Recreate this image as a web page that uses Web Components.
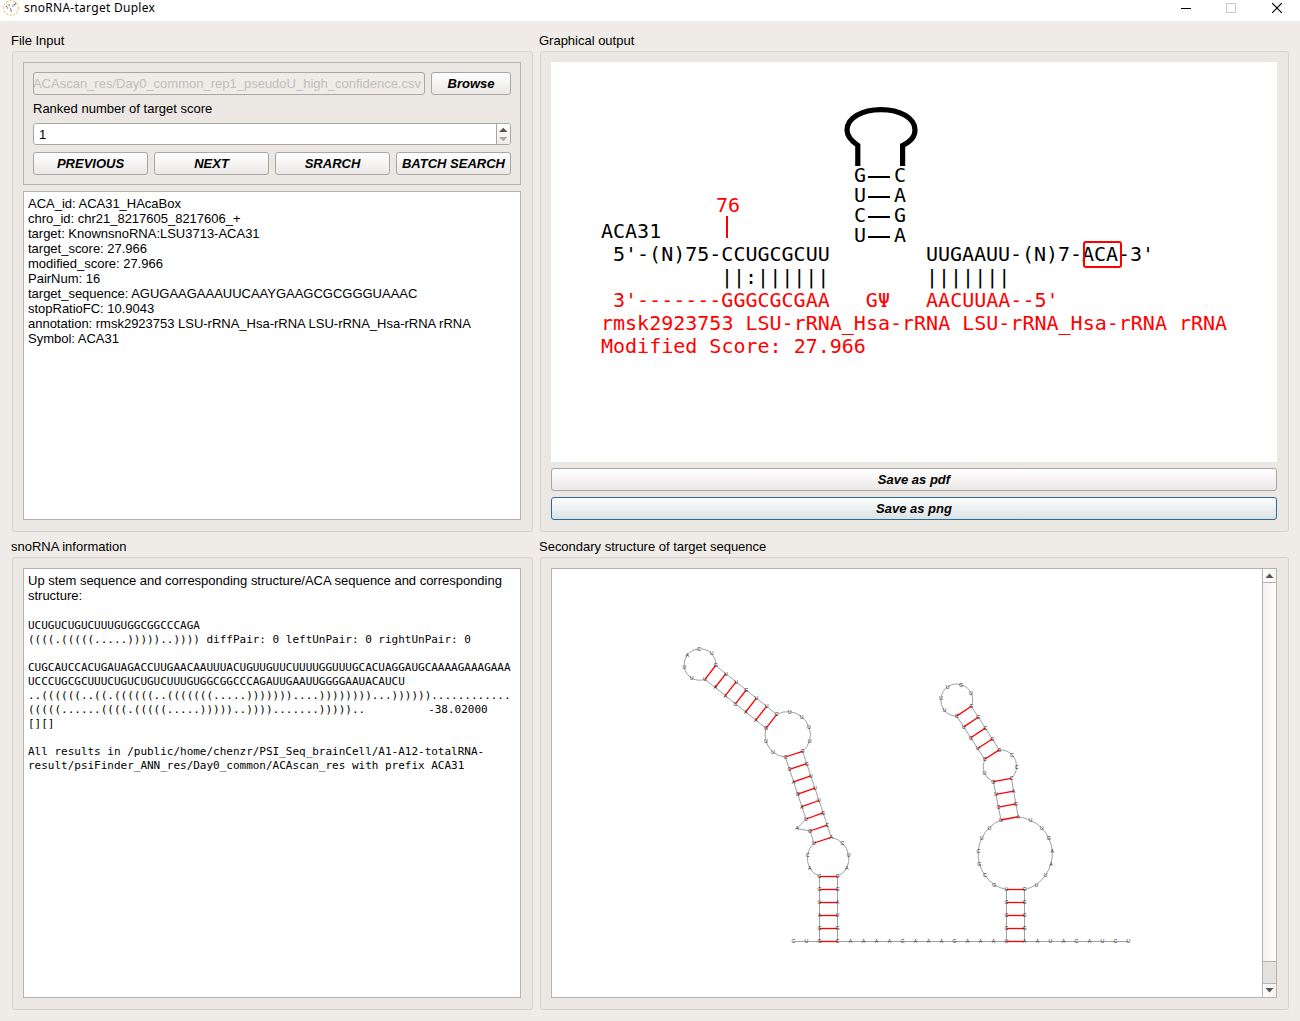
<!DOCTYPE html>
<html lang="en"><head><meta charset="utf-8"><title>snoRNA-target Duplex</title>
<style>html,body{margin:0;width:1300px;height:1021px;overflow:hidden;background:#efebe7}</style></head>
<body><duplex-app></duplex-app>
<script>
function define(name, html, setup){
  customElements.define(name, class extends HTMLElement{
    constructor(){super();this.attachShadow({mode:'open'}).innerHTML='<style>*{box-sizing:border-box}:host{box-sizing:border-box}</style>'+html;}
    connectedCallback(){if(setup)setup(this,this.shadowRoot);}
  });
}

define('title-bar',`<style>
:host{display:flex;height:21px;background:#fff;align-items:flex-start;padding-left:3px;font:12px/16px "Noto Sans",sans-serif;color:#000}
span{margin-left:5px;flex:1;letter-spacing:.28px}svg{display:block}</style>
<svg width="16" height="16" viewBox="0 0 16 16"><circle cx="8" cy="8" r="7.3" fill="none" stroke="#f5bd72" stroke-width="1.1" stroke-dasharray="2.4 1.2"/><path d="M4 4.5l2.200 1.800 1.200 2.200.5 3M12 3.500l-1.500 1.700-2 1" fill="none" stroke="#bbb" stroke-width=".7"/><path d="M3 6.500h1M5.600 5h1.200M11 4.500h1.400M9.500 6.200h1M4 8h1M7.300 9h1M7.700 11h1.200M12 3h1" stroke="#444" stroke-width="1"/></svg>
<span>snoRNA-target Duplex</span>
<svg width="120" height="21" viewBox="1180 0 120 21"><path d="M1181 8.5h10" stroke="#000"/><rect x="1226.5" y="3.5" width="9" height="9" fill="none" stroke="#ccc"/><path d="M1272.2 3.2l9.6 9.6M1281.8 3.2l-9.6 9.6" stroke="#000" stroke-width="1.2"/></svg>`);

define('group-panel',`<style>
:host{display:flex;flex-direction:column;font:13px/15px "Liberation Sans",Arial,sans-serif;color:#000}
.t{height:18px;margin-left:-1px;white-space:nowrap;letter-spacing:-.01px}
.b{flex:1;min-height:0;border:1px solid #d6d2ce;border-radius:3px;background:#ebe7e2;padding:10px 11px 11px 10px;display:flex;flex-direction:column}
</style><div class="t"></div><div class="b"><slot></slot></div>`,(h,r)=>r.querySelector('.t').textContent=h.getAttribute('label'));

define('push-button',`<style>
:host{display:flex;height:23px;align-items:center;justify-content:center;border:1px solid #aaa6a3;border-radius:3px;background:linear-gradient(#fff,#ebe9e7);font:italic bold 13px/15px "Liberation Sans",Arial,sans-serif;color:#000;white-space:nowrap}
:host([active]){border-color:#2a6b98;background:linear-gradient(#fdfefe,#dae2e5)}
</style><span><slot></slot></span>`);

define('path-field',`<style>
:host{display:flex;height:23px;justify-content:flex-end;align-items:center;overflow:hidden;border:1px solid #aaa6a3;border-radius:3px;background:#efebe7;padding-right:3px;color:#bebebe;font:13px/15px "Liberation Sans",Arial,sans-serif;white-space:nowrap}
</style><span><slot></slot></span>`);

define('spin-box',`<style>
:host{display:flex;height:22px;border:1px solid #aaa6a3;border-radius:3px;background:#fff;font:13px/20px "Liberation Sans",Arial,sans-serif}
span{flex:1;padding:1px 0 0 5px}div{width:14px;border-left:1px solid #aaa6a3;background:linear-gradient(#fff,#efedeb);border-radius:0 2px 2px 0}svg{display:block}
</style><span><slot></slot></span><div><svg width="13" height="20"><path d="M2 8h8.500L6.250 3.700z" fill="#555"/><path d="M2 13h8.500L6.250 17.300z" fill="#aaa"/></svg></div>`);

define('text-view',`<style>
:host{display:block;border:1px solid #b6b2ae;background:#fff;padding:4px;font:13px/15px "Liberation Sans",Arial,sans-serif;letter-spacing:-.012px;white-space:pre;color:#000;overflow:hidden}
::slotted(.m){font:11px/14px "DejaVu Sans Mono",monospace}
</style><slot></slot>`);

define('search-form',`<style>
:host{display:flex;flex-direction:column;height:123px;border:1px solid #b6b2ae;padding:9px;font:13px/15px "Liberation Sans",Arial,sans-serif}
.r{display:flex;gap:6px}path-field{width:392px}.r>push-button{flex:1 0 0;min-width:0}
.l{height:28px;padding-top:6px}spin-box{margin-bottom:7px}
</style><div class="r"><path-field>ACAscan_res/Day0_common_rep1_pseudoU_high_confidence.csv</path-field><push-button>Browse</push-button></div>
<div class="l">Ranked number of target score</div><spin-box>1</spin-box>
<div class="r"><push-button>PREVIOUS</push-button><push-button>NEXT</push-button><push-button>SRARCH</push-button><push-button>BATCH SEARCH</push-button></div>`);

define('duplex-view',`<style>:host{display:block;height:400px;background:#fff}svg{display:block}text{font:20px "DejaVu Sans Mono",monospace;white-space:pre}.r{fill:#f00}</style>
<svg width="726" height="400" viewBox="551 62 726 400">
<path d="M857.8 166V145.3C850 140 847 135.500 847 130C847 118 862 109.700 881 109.700C900 109.700 915 118 915 130C915 136.500 911 141.500 902.600 145.500V166" fill="none" stroke="#000" stroke-width="5.2"/>
<g id="stem"></g>
<text class="r" x="716" y="212">76</text><path d="M727 216v22" stroke="#f00" stroke-width="2"/>
<text x="601" y="238">ACA31</text>
<text x="613" y="261">5'-(N)75-CCUGCGCUU</text><text x="926" y="261" textLength="228">UUGAAUU-(N)7-ACA-3'</text>
<text x="721" y="284">||:||||||</text><text x="926" y="284">|||||||</text>
<text class="r" x="613" y="307">3'-------GGGCGCGAA   GΨ   AACUUAA--5'</text>
<text class="r" x="601" y="330">rmsk2923753 LSU-rRNA_Hsa-rRNA LSU-rRNA_Hsa-rRNA rRNA</text>
<text class="r" x="601" y="353">Modified Score: 27.966</text>
<rect x="1084" y="242" width="37" height="25" rx="2" fill="none" stroke="#f00" stroke-width="2"/>
</svg>`,(h,r)=>{
  r.getElementById('stem').innerHTML=['GC','UA','CG','UA'].map((p,i)=>{const y=182+20*i;
    return `<text x="854" y="${y}">${p[0]}</text><text x="894" y="${y}">${p[1]}</text><path d="M868 ${y-5}h22" stroke="#000" stroke-width="2"/>`}).join('');
});

define('scroll-bar',`<style>
:host{display:flex;flex-direction:column;width:14px;border-left:1px solid #b6b2ae;background:#e4e2de}
.b{height:13px;background:linear-gradient(90deg,#fff,#f4f3f1)}.h{height:380px;border:solid #b6b2ae;border-width:1px 0;background:linear-gradient(90deg,#f1f0ed,#fff)}.g{flex:1}.d{height:14px;border-top:1px solid #b6b2ae}svg{display:block}
</style><div class="b"><svg width="13" height="13"><path d="M2.500 9h8L6.500 4.500z" fill="#555"/></svg></div><div class="h"></div><div class="g"></div><div class="b d"><svg width="13" height="13"><path d="M2.500 4h8l-4 4.500z" fill="#555"/></svg></div>`);

define('fold-view',`<style>
:host{display:flex;flex:1;min-height:0;border:1px solid #b6b2ae;background:#fff}
#c{flex:1;display:block}text{font:5.3px "Liberation Sans",Arial,sans-serif;text-anchor:middle;fill:#333}
</style><svg id="c" width="710" height="428" viewBox="552 569 710 428"></svg><scroll-bar></scroll-bar>`,(h,r)=>{
  const seq='CUGCAUCCACUGAUAGACCUUGAACAAUUUACUGUUGUUCUUUUGGUUUGCACUAGGAUGCAAAAGAAAGAAAUCCCUGCGCUUUCUGUCUGUCUUUGUGGCGGCCCAGAUUGAAUUGGGGAAUACAUCU';
  const pts=[],pairs=[];
  // A point's third value is the radius of the arc that leads to it; 0 is a straight bond.
  const add=(x,y,a=0)=>pts.push([x,y,a]);
  const run=(x,y,dx,dy,n,a=0)=>{for(let i=0;i<n;i++)add(x+dx*i,y+dy*i,i?0:a)};
  const loop=(rad,...p)=>{for(let i=0;i<p.length;i+=2)add(p[i],p[i+1],rad)};
  run(793.5,941.5,13,0,2);
  run(819.5,941.5,0,-13,6); loop(21,809.7,868,807.7,855,814,843);
  add(810,831);add(797,828.5);
  run(806,819,-4.13,-12.4,6); loop(22.5,773,752,766,741);
  run(766,728.3,-10.17,-8.16,7,22.5); loop(15.8,691.7,678,684.3,667.3,687.3,655,699,649,711.7,653.5);
  run(715.7,665.5,10.17,8.16,7,15.8); loop(22.5,789.7,711.7,801.7,716.7,809,727,809.7,740.7);
  run(802.6,751.3,4.1,12.3,8,22.5); loop(21,842.5,843.3,848.7,855,846.7,868);
  run(837.5,876.5,0,13,6,21); run(850.5,941.5,13,0,12);
  run(1006.5,941.5,0,-13,5); loop(37.5,994.3,884.7,985,875.3,979.3,863.7,978.3,851,981.7,838,989.3,827.7);
  run(1001,820,-2.55,-12.8,4,37.5); loop(17,984.3,772.7);
  run(984.7,759.3,-7,-10.8,5,17); loop(16,944.3,710.3,941,697.7,947.7,686.7,961,684.7,971,692.7);
  run(971.3,706.3,7,10.9,5,16); loop(17,1012,754.7,1016.7,767);
  run(1011.3,778.3,2.3,12.8,4,17); loop(37.5,1030.3,820.3,1041.7,827.7,1048.7,838,1052.3,851,1051,863.7,1045.3,875.3,1036.3,884.7);
  run(1024.5,889.5,0,13,5,37.5); run(1037.5,941.5,13,0,8);
  const join=(a,b,n)=>{for(let i=0;i<n;i++)pairs.push([a+i,b-i])};
  join(2,60,6);join(11,52,2);
  const at=(x,y)=>pts.findIndex(p=>Math.hypot(p[0]-x,p[1]-y)<1);
  pairs.length=6;
  join(at(814,843),at(831.3,837.4),2);join(at(806,819),at(823.1,812.8),6);join(at(766,728.3),at(776.7,714.5),7);
  join(at(1006.5,941.5),at(1024.5,941.5),5);join(at(1001,820),at(1018.2,816.7),4);join(at(984.7,759.3),at(999.3,749.9),5);
  const d=pts.map((p,i)=>!i?`M${p[0]} ${p[1]}`:p[2]?`A${p[2]} ${p[2]} 0 0 1 ${p[0]} ${p[1]}`:`L${p[0]} ${p[1]}`).join('');
  r.getElementById('c').innerHTML=`<path d="${d}" fill="none" stroke="#777" stroke-width=".7"/>`+
   pairs.map(([a,b])=>`<path d="M${pts[a][0]} ${pts[a][1]}L${pts[b][0]} ${pts[b][1]}" stroke="#f00" stroke-width="1.3"/>`).join('')+
   pts.map((p,i)=>`<text x="${p[0]}" y="${p[1]+1.9}">${seq[i]||''}</text>`).join('');
});

define('duplex-app',`<style>
:host{display:flex;flex-direction:column;width:1300px;height:1021px;background:#efebe7}
main{display:grid;grid-template-columns:521px 749px;grid-template-rows:499px 471px;column-gap:7px;row-gap:7px;padding:12px 11px 11px 12px}
.in text-view{height:329px;margin-top:6px}.info text-view{flex:1}
.out push-button{margin-top:6px}
</style><title-bar></title-bar><main>
<group-panel class="in" label="File Input"><search-form></search-form><text-view>ACA_id: ACA31_HAcaBox
chro_id: chr21_8217605_8217606_+
target: KnownsnoRNA:LSU3713-ACA31
target_score: 27.966
modified_score: 27.966
PairNum: 16
target_sequence: AGUGAAGAAAUUCAAYGAAGCGCGGGUAAAC
stopRatioFC: 10.9043
annotation: rmsk2923753 LSU-rRNA_Hsa-rRNA LSU-rRNA_Hsa-rRNA rRNA
Symbol: ACA31</text-view></group-panel>
<group-panel class="out" label="Graphical output"><duplex-view></duplex-view><push-button>Save as pdf</push-button><push-button active>Save as png</push-button></group-panel>
<group-panel class="info" label="snoRNA information"><text-view><div>Up stem sequence and corresponding structure/ACA sequence and corresponding
structure:</div><div class="m" style="padding-top:16px">UCUGUCUGUCUUUGUGGCGGCCCAGA
((((.(((((.....)))))..)))) diffPair: 0 leftUnPair: 0 rightUnPair: 0

CUGCAUCCACUGAUAGACCUUGAACAAUUUACUGUUGUUCUUUUGGUUUGCACUAGGAUGCAAAAGAAAGAAA
UCCCUGCGCUUUCUGUCUGUCUUUGUGGCGGCCCAGAUUGAAUUGGGGAAUACAUCU
..((((((..((.((((((..(((((((.....)))))))....))))))))...))))))............
(((((......((((.(((((.....)))))..)))).......)))))..<span style="margin-left:63px">-38.02000</span>
[][]

All results in /public/home/chenzr/PSI_Seq_brainCell/A1-A12-totalRNA-
result/psiFinder_ANN_res/Day0_common/ACAscan_res with prefix ACA31</div></text-view></group-panel>
<group-panel label="Secondary structure of target sequence"><fold-view></fold-view></group-panel>
</main>`);
</script></body></html>
